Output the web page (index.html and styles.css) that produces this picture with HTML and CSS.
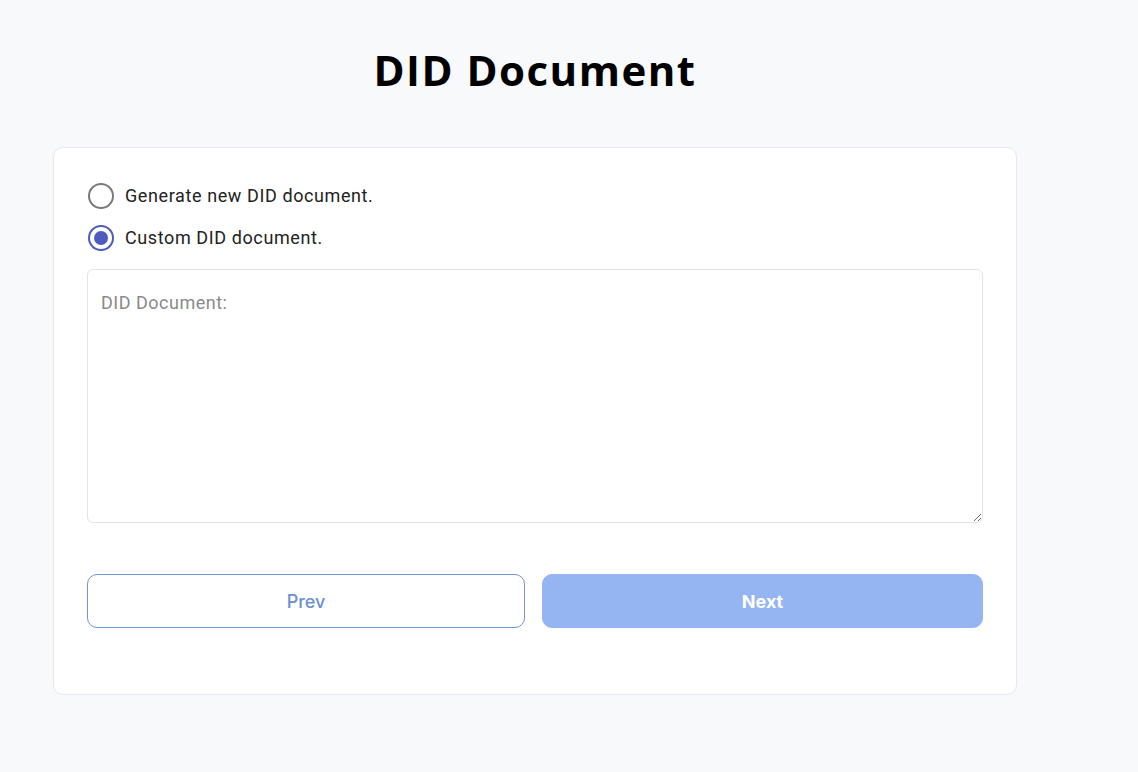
FILE: index.html
```html
<!DOCTYPE html>
<html lang="en">
<head>
<meta charset="utf-8">
<title>DID Document</title>
<link rel="stylesheet" href="styles.css">
</head>
<body>
<main class="page">
  <h1 class="title">DID Document</h1>
  <section class="card">
    <div class="options">
      <label class="option">
        <input type="radio" name="did" class="radio">
        <span>Generate new DID document.</span>
      </label>
      <label class="option">
        <input type="radio" name="did" class="radio" checked>
        <span>Custom DID document.</span>
      </label>
    </div>
    <textarea class="doc" placeholder="DID Document:"></textarea>
    <div class="actions">
      <button class="btn btn-prev" type="button">Prev</button>
      <button class="btn btn-next" type="button">Next</button>
    </div>
  </section>
</main>
</body>
</html>
```
FILE: styles.css
```css
* { box-sizing: border-box; }
html, body { margin: 0; padding: 0; }
body {
  background: #f8f9fb;
  font-family: Roboto, "Liberation Sans", sans-serif;
  color: #222;
  width: 1138px;
  height: 772px;
  overflow: hidden;
}
.page {
  padding: 42px 0 0 53px;
  width: 1017px;
}
.title {
  margin: 0 0 49px 0;
  text-align: center;
  font-family: "Open Sans", "Liberation Sans", sans-serif;
  font-weight: 700;
  font-size: 42px;
  line-height: 56px;
  color: #000;
  letter-spacing: 1.5px;
}
.card {
  width: 964px;
  height: 548px;
  background: #fff;
  border: 1px solid #e6e8ee;
  border-radius: 10px;
  padding: 35px 33px 0 33px;
}
.options {
  display: flex;
  flex-direction: column;
  gap: 16px;
  padding-left: 1px;
}
.option {
  display: flex;
  align-items: center;
  gap: 11px;
  font-size: 18px;
  letter-spacing: 0.6px;
  line-height: 26px;
  color: #222;
  cursor: pointer;
}
.radio {
  appearance: none;
  -webkit-appearance: none;
  margin: 0;
  width: 26px;
  height: 26px;
  border: 2px solid #7a7a7a;
  border-radius: 50%;
  display: grid;
  place-items: center;
  background: #fff;
}
.radio:checked {
  border-color: #4c5bbd;
}
.radio:checked::after {
  content: "";
  width: 14px;
  height: 14px;
  border-radius: 50%;
  background: #4c5bbd;
}
.doc {
  display: block;
  margin-top: 18px;
  width: 896px;
  height: 254px;
  border: 1px solid #e3e3e3;
  border-radius: 6px;
  padding: 21px 13px;
  font-family: Roboto, "Liberation Sans", sans-serif;
  font-size: 18px;
  letter-spacing: 0.5px;
  line-height: 24px;
  resize: vertical;
  background: #fff;
}
.doc::placeholder { color: #8a8a8a; }
.actions {
  display: flex;
  gap: 17px;
  margin-top: 51px;
}
.btn {
  height: 54px;
  border-radius: 10px;
  font-family: Inter, "Liberation Sans", sans-serif;
  font-size: 18px;
  cursor: pointer;
}
.btn-prev {
  width: 438px;
  background: #fff;
  border: 1px solid #7395d0;
  color: #6d8fd6;
  font-weight: 500;
}
.btn-next {
  width: 441px;
  background: #94b4f2;
  border: 1px solid #94b4f2;
  color: #fff;
  font-weight: 700;
}
```
